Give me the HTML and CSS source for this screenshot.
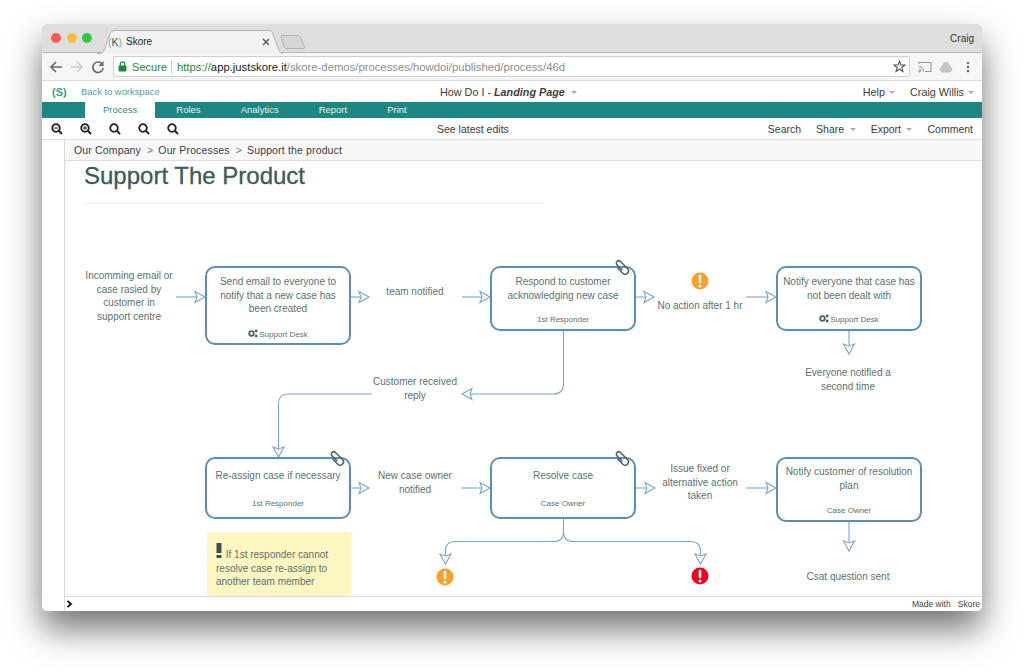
FILE: index.html
```html
<!DOCTYPE html>
<html lang="en">
<head>
    <meta charset="UTF-8">
    <title>Skore</title>
    <link rel="stylesheet" href="styles.css">
</head>
<body>
    <div class="window">
        <!-- browser title bar -->
        <div class="titlebar">
            <div class="lights">
                <span class="light red"></span>
                <span class="light yellow"></span>
                <span class="light green"></span>
            </div>
            <div class="tab">
                <svg class="tab-shape" width="186" height="24" viewBox="0 0 186 24"><path d="M0 23.5H3C6 23.5 7 21 8 18L13 4C14 1.500 15 .5 18 .5H171C174 .5 175 1.500 176 4L181 18C182 21 183 23.500 186 23.500" fill="#f2f2f2" stroke="#b4b4b4"/></svg>
                <span class="favicon"><b class="fav-paren">(</b>K<b class="fav-paren">)</b></span>
                <span class="tab-title">Skore</span>
                <svg class="tab-close" width="8" height="8" viewBox="0 0 8 8"><path d="M1 1L7 7M7 1L1 7" stroke="#555" stroke-width="1.400"/></svg>
            </div>
            <svg class="newtab" width="26" height="14" viewBox="0 0 26 14"><path d="M1 1.500Q.5 .5 2 .5H18Q19.500 .5 20 1.500L24.500 12Q25 13.500 23.500 13.500H6Q5 13.500 4.500 12.500Z" fill="#d6d6d6" stroke="#b2b2b2"/></svg>
            <span class="chrome-user">Craig</span>
        </div>

        <!-- browser toolbar -->
        <div class="urlbar">
            <svg class="nav-icon" width="14" height="14" viewBox="0 0 14 14"><path d="M13 7H2M7 2L2 7L7 12" fill="none" stroke="#666" stroke-width="1.600"/></svg>
            <svg class="nav-icon" width="14" height="14" viewBox="0 0 14 14"><path d="M1 7H12M7 2L12 7L7 12" fill="none" stroke="#ccc" stroke-width="1.600"/></svg>
            <svg class="nav-icon" width="14" height="14" viewBox="0 0 14 14"><path d="M11.500 4.500A5.200 5.200 0 1 0 12.200 8" fill="none" stroke="#666" stroke-width="1.600"/><path d="M12.500 1V6H7.500Z" fill="#666"/></svg>
            <div class="urlbox">
                <svg width="9" height="11" viewBox="0 0 9 11"><rect x="0.500" y="4.500" width="8" height="6" rx="1" fill="#1c8a3e"/><path d="M2.300 5V3A2.200 2.200 0 0 1 6.700 3V5" fill="none" stroke="#1c8a3e" stroke-width="1.200"/></svg>
                <span class="secure">Secure</span>
                <span class="url"><span class="url-scheme">https://</span><span class="url-host">app.justskore.it</span>/skore-demos/processes/howdoi/published/process/46d</span>
                <svg class="star" width="13" height="13" viewBox="0 0 13 13"><path d="M6.500 1.200L8 5H12L8.800 7.500L10 11.500L6.500 9.200L3 11.500L4.200 7.500L1 5H5Z" fill="none" stroke="#555" stroke-width="1.100"/></svg>
            </div>
            <svg class="ext-icon ext-cast" width="14" height="12" viewBox="0 0 14 12"><path d="M1 3V1.500H13V10.500H7M1 5.500A5 5 0 0 1 5.500 10.500M1 8A2.500 2.500 0 0 1 3 10.500" fill="none" stroke="#8a9a9a" stroke-width="1.100"/><circle cx="1.300" cy="10.500" r="1" fill="#8a9a9a"/></svg>
            <svg class="ext-icon ext-drive" width="14" height="12" viewBox="0 0 14 12"><path d="M5 1H9L13.500 8.500L11.500 11.500H2.500L.5 8.500Z" fill="#c4c4c4"/></svg>
            <svg class="ext-icon ext-menu" width="4" height="12" viewBox="0 0 4 12"><circle cx="2" cy="2" r="1.200" fill="#666"/><circle cx="2" cy="6" r="1.200" fill="#666"/><circle cx="2" cy="10" r="1.200" fill="#666"/></svg>
        </div>

        <!-- app header -->
        <div class="app-header">
            <div class="app-left">
                <span class="logo">(S)</span>
                <a class="back-link">Back to workspace</a>
            </div>
            <div class="app-title">How Do I - <b><i>Landing Page</i></b><span class="caret"></span></div>
            <div class="app-right">
                <span>Help<span class="caret"></span></span>
                <span>Craig Willis<span class="caret"></span></span>
            </div>
        </div>

        <!-- tabs -->
        <div class="tabs">
            <span class="tabs-item active">Process</span>
            <span class="tabs-item">Roles</span>
            <span class="tabs-item">Analytics</span>
            <span class="tabs-item">Report</span>
            <span class="tabs-item">Print</span>
        </div>

        <!-- tools -->
        <div class="tools">
            <div class="zooms">
                <svg width="12" height="12" viewBox="0 0 12 12"><circle cx="5" cy="5" r="3.800" fill="none" stroke="#222" stroke-width="1.800"/><path d="M7.800 7.800L11 11" stroke="#222" stroke-width="2"/><path d="M3 5H7" stroke="#222"/></svg>
                <svg width="12" height="12" viewBox="0 0 12 12"><circle cx="5" cy="5" r="3.800" fill="none" stroke="#222" stroke-width="1.800"/><path d="M7.800 7.800L11 11" stroke="#222" stroke-width="2"/><path d="M3 5H7M5 3V7" stroke="#222"/></svg>
                <svg width="12" height="12" viewBox="0 0 12 12"><circle cx="5" cy="5" r="3.800" fill="none" stroke="#222" stroke-width="1.800"/><path d="M7.800 7.800L11 11" stroke="#222" stroke-width="2"/></svg>
                <svg width="12" height="12" viewBox="0 0 12 12"><circle cx="5" cy="5" r="3.800" fill="none" stroke="#222" stroke-width="1.800"/><path d="M7.800 7.800L11 11" stroke="#222" stroke-width="2"/></svg>
                <svg width="12" height="12" viewBox="0 0 12 12"><circle cx="5" cy="5" r="3.800" fill="none" stroke="#222" stroke-width="1.800"/><path d="M7.800 7.800L11 11" stroke="#222" stroke-width="2"/></svg>
            </div>
            <div class="latest">See latest edits</div>
            <div class="tools-right">
                <span>Search</span>
                <span>Share<span class="caret"></span></span>
                <span>Export<span class="caret"></span></span>
                <span>Comment</span>
            </div>
        </div>

        <div class="main">
            <div class="rail"></div>
            <div class="content">
                <div class="crumbs">
                    <span>Our Company</span><span class="crumb-sep">&gt;</span><span>Our Processes</span><span class="crumb-sep">&gt;</span><span>Support the product</span>
                </div>

                <!-- diagram canvas -->
                <div class="canvas">
                    <h1 class="page-title">Support The Product</h1>
                    <div class="title-rule"></div>

                    <svg class="layer" width="916" height="435" viewBox="65 161 916 435">
                        <defs>
                            <path id="head-r" d="M-10 -5.500L0 0L-10 5.500L-8 0Z" fill="#fff" stroke="#7ba5cb" stroke-width="1.100"/>
                            <path id="head-d" d="M-5.500 -10L0 0L5.500 -10L0 -8Z" fill="#fff" stroke="#7ba5cb" stroke-width="1.100"/>
                            <path id="head-l" d="M10 -5.500L0 0L10 5.500L8 0Z" fill="#fff" stroke="#7ba5cb" stroke-width="1.100"/>
                        </defs>
                        <g fill="none" stroke="#7ba5cb" stroke-width="1.100">
                            <path d="M176 297H197"/>
                            <path d="M351 297H361"/>
                            <path d="M462 297H482"/>
                            <path d="M636 297H646"/>
                            <path d="M746 297H768"/>
                            <path d="M849 331V346"/>
                            <path d="M563.500 331V384Q563.500 394 553 394H470"/>
                            <path d="M372 394H288Q278.500 394 278.500 404V449"/>
                            <path d="M351 488H361"/>
                            <path d="M461 488H482"/>
                            <path d="M636 488H647"/>
                            <path d="M746 488H768"/>
                            <path d="M849 522V543"/>
                            <path d="M563.500 519V532Q563.500 541.500 553 541.500H455Q445.500 541.500 445.500 551V556"/>
                            <path d="M563.500 532Q563.500 541.500 574 541.500H690Q700.500 541.500 700.500 551V556"/>
                        </g>
                        <use href="#head-r" x="205" y="297"/>
                        <use href="#head-r" x="369" y="297"/>
                        <use href="#head-r" x="490" y="297"/>
                        <use href="#head-r" x="654" y="297"/>
                        <use href="#head-r" x="776" y="297"/>
                        <use href="#head-d" x="849" y="354"/>
                        <use href="#head-l" x="462" y="394"/>
                        <use href="#head-d" x="278.500" y="457"/>
                        <use href="#head-r" x="369" y="488"/>
                        <use href="#head-r" x="490" y="488"/>
                        <use href="#head-r" x="655" y="488"/>
                        <use href="#head-r" x="776" y="488"/>
                        <use href="#head-d" x="849" y="551"/>
                        <use href="#head-d" x="445.500" y="564"/>
                        <use href="#head-d" x="700.500" y="564"/>
                    </svg>

                    <div class="label lb-incoming">Incomming email or<br>case rasied by<br>customer in<br>support centre</div>
                    <div class="label lb-team">team notified</div>
                    <div class="label lb-noaction">No action after 1 hr</div>
                    <div class="label lb-everyone">Everyone notified a<br>second time</div>
                    <div class="label lb-reply">Customer received<br>reply</div>
                    <div class="label lb-owner">New case owner<br>notified</div>
                    <div class="label lb-issue">Issue fixed or<br>alternative action<br>taken</div>
                    <div class="label lb-csat">Csat question sent</div>

                    <div class="node n-send">
                        <div class="node-text">Send email to everyone to notify that a new case has been created</div>
                        <div class="node-role"><svg width="10" height="9" viewBox="0 0 10 9"><circle cx="3.500" cy="4.500" r="2.300" fill="none" stroke="#4b6262" stroke-width="1.800"/><circle cx="8.200" cy="2" r="1.400" fill="#4b6262"/><circle cx="8.200" cy="7" r="1.400" fill="#4b6262"/></svg>Support Desk</div>
                    </div>
                    <div class="node n-respond">
                        <div class="node-text">Respond to customer acknowledging new case</div>
                        <div class="node-role">1st Responder</div>
                    </div>
                    <div class="node n-notify">
                        <div class="node-text">Notify everyone that case has not been dealt with</div>
                        <div class="node-role"><svg width="10" height="9" viewBox="0 0 10 9"><circle cx="3.500" cy="4.500" r="2.300" fill="none" stroke="#4b6262" stroke-width="1.800"/><circle cx="8.200" cy="2" r="1.400" fill="#4b6262"/><circle cx="8.200" cy="7" r="1.400" fill="#4b6262"/></svg>Support Desk</div>
                    </div>
                    <div class="node node-short n-reassign">
                        <div class="node-text">Re-assign case if necessary</div>
                        <div class="node-role">1st Responder</div>
                    </div>
                    <div class="node node-short n-resolve">
                        <div class="node-text">Resolve case</div>
                        <div class="node-role">Case Owner</div>
                    </div>
                    <div class="node n-plan">
                        <div class="node-text">Notify customer of resolution plan</div>
                        <div class="node-role">Case Owner</div>
                    </div>

                    <div class="note"><svg class="bang" width="6" height="15" viewBox="0 0 6 15"><rect x="0.500" width="5" height="10" fill="#3a5050"/><rect x="0.500" y="12" width="5" height="3" fill="#3a5050"/></svg> If 1st responder cannot resolve case re-assign to another team member</div>

                    <!-- clips and alerts sit over the nodes -->
                    <svg class="layer" width="916" height="435" viewBox="65 161 916 435">
                        <defs>
                            <g id="clip" fill="none" stroke="#4d6062" stroke-width="1.500">
                                <path transform="rotate(-45)" d="M-2 2.500V-5A2.400 2.400 0 0 1 2.800 -5V5A3.300 3.300 0 0 1 -3.800 5V-2.500"/>
                            </g>
                            <g id="alert">
                                <path d="M0 -5V1" stroke="#fff" stroke-width="2.600" stroke-linecap="round"/>
                                <circle cy="5" r="1.500" fill="#fff"/>
                            </g>
                        </defs>
                        <use href="#clip" x="622" y="267"/>
                        <use href="#clip" x="337" y="458"/>
                        <use href="#clip" x="622" y="458"/>
                        <circle cx="700" cy="281" r="8.500" fill="#f9a02c"/>
                        <use href="#alert" x="700" y="281"/>
                        <circle cx="445" cy="577" r="8.500" fill="#f9a02c"/>
                        <use href="#alert" x="445" y="577"/>
                        <circle cx="700" cy="576" r="8.500" fill="#f5001e"/>
                        <use href="#alert" x="700" y="576"/>
                    </svg>
                </div>

                <div class="footer">
                    <svg width="7" height="8" viewBox="0 0 7 8"><path d="M1.500 1L5 4L1.500 7" fill="none" stroke="#222" stroke-width="2"/></svg>
                    <span class="made">Made with &nbsp; Skore</span>
                </div>
            </div>
        </div>
    </div>
</body>
</html>
```

FILE: styles.css
```css
/* page */
html, body {
    height: 100%;
}
body {
    margin: 0;
    background-color: #fff;
    font-family: "Liberation Sans", Arial, sans-serif;
    overflow: hidden;
}
.window {
    width: 940px;
    height: 587px;
    margin: 24px 0 0 42px;
    display: flex;
    flex-direction: column;
    background-color: #fff;
    border-radius: 5px;
    box-shadow: 0 18px 34px rgba(0, 0, 0, 0.55);
    overflow: hidden;
}

/* browser chrome */
.titlebar {
    height: 28px;
    flex: none;
    display: flex;
    align-items: flex-end;
    background-color: #dedede;
    border-bottom: 1px solid #b8b8b8;
}
.lights {
    width: 55px;
    flex: none;
    align-self: center;
    display: flex;
    gap: 5.500px;
    padding-left: 9px;
    box-sizing: border-box;
}
.light {
    width: 10px;
    height: 10px;
    flex: none;
    border-radius: 50%;
}
.light.red { background-color: #fc5753; }
.light.yellow { background-color: #fdbc40; }
.light.green { background-color: #33c748; }
.tab {
    position: relative;
    width: 186px;
    height: 23px;
    margin-bottom: -1px;
    flex: none;
    display: flex;
    align-items: center;
    padding: 0 13px 0 11px;
    box-sizing: border-box;
    font-size: 10px;
    color: #222;
}
.tab-shape {
    position: absolute;
    left: 0;
    top: 0;
}
.favicon {
    position: relative;
    width: 14px;
    margin-right: 4px;
    font-size: 10.500px;
    text-align: center;
    color: #2b5f5c;
    white-space: nowrap;
}
.fav-paren {
    color: #59c48c;
    font-weight: normal;
}
.tab-title {
    position: relative;
    flex: 1;
}
.tab-close {
    position: relative;
}
.newtab {
    flex: none;
    margin: 0 0 3px -3px;
}
.chrome-user {
    margin-left: auto;
    align-self: center;
    padding-right: 8px;
    font-size: 10px;
    color: #333;
}
.urlbar {
    height: 28px;
    flex: none;
    display: flex;
    align-items: center;
    padding-left: 7px;
    box-sizing: border-box;
    background-color: #f6f6f6;
    border-bottom: 1px solid #dcdcdc;
}
.nav-icon {
    margin-right: 7.200px;
    flex: none;
}
.urlbox {
    width: 797px;
    height: 21px;
    flex: none;
    display: flex;
    align-items: center;
    gap: 5px;
    padding: 0 3px 0 4.500px;
    box-sizing: border-box;
    background-color: #fff;
    border: 1px solid #cfcfcf;
    border-radius: 2px;
    font-size: 11.300px;
    white-space: nowrap;
}
.secure {
    padding-right: 4px;
    border-right: 1px solid #ccc;
    font-size: 11px;
    line-height: 14px;
    color: #1c8a3e;
}
.url { color: #8d8d8d; }
.url-scheme { color: #1c8a3e; }
.url-host { color: #222; }
.star { margin-left: auto; }
.ext-icon { flex: none; }
.ext-cast { margin-left: 8px; }
.ext-drive { margin-left: 7px; }
.ext-menu { margin-left: 13px; }

/* app header */
.app-header {
    position: relative;
    height: 21px;
    flex: none;
    display: flex;
    align-items: center;
    justify-content: space-between;
    padding: 0 8px 0 10px;
    font-size: 10.800px;
    color: #3c3c3c;
}
.app-left {
    display: flex;
    align-items: center;
}
.logo {
    width: 29px;
    font-size: 11px;
    font-weight: bold;
    color: #3f9a95;
}
.back-link {
    font-size: 9.400px;
    color: #4fa39e;
}
.app-title {
    position: absolute;
    left: 398px;
    white-space: nowrap;
}
.app-right {
    display: flex;
    gap: 15px;
}
.caret {
    display: inline-block;
    width: 0;
    height: 0;
    margin-left: 6px;
    vertical-align: 2px;
    border-left: 3px solid transparent;
    border-right: 3px solid transparent;
    border-top: 3px solid #aaa;
}
.app-right .caret {
    margin-left: 4px;
}

/* teal tabs */
.tabs {
    height: 16px;
    flex: none;
    display: flex;
    padding-left: 43px;
    background-color: #1f8783;
    font-size: 9.500px;
    line-height: 16px;
    color: #e4f2f1;
}
.tabs-item {
    padding: 0 20px;
}
.tabs-item.active {
    padding: 0 18px;
    margin-right: 1px;
    background-color: #fff;
    color: #2f8f8a;
}

/* tool row */
.tools {
    position: relative;
    height: 22px;
    flex: none;
    display: flex;
    align-items: center;
    justify-content: space-between;
    padding: 0 9px 0 9px;
    box-sizing: border-box;
    border-bottom: 1px solid #ddd;
    font-size: 10.500px;
    color: #3c3c3c;
}
.tools .caret {
    margin-left: 5.500px;
}
.zooms {
    display: flex;
    gap: 17px;
}
.latest {
    position: absolute;
    left: 395px;
}
.tools-right {
    display: flex;
    gap: 15px;
}

/* main area */
.main {
    flex: 1;
    display: flex;
    min-height: 0;
}
.rail {
    width: 22px;
    flex: none;
    border-right: 1px solid #d8d8d8;
}
.content {
    flex: 1;
    display: flex;
    flex-direction: column;
    min-width: 0;
}
.crumbs {
    height: 21px;
    flex: none;
    display: flex;
    align-items: center;
    padding-left: 9px;
    box-sizing: border-box;
    background-color: #f8f8f8;
    border-bottom: 1px solid #ddd;
    font-size: 10.500px;
    letter-spacing: 0.150px;
    color: #3c3c3c;
}
.crumb-sep {
    margin: 0 5px 0 6px;
    color: #777;
}
.canvas {
    position: relative;
    height: 435px;
    flex: none;
    overflow: hidden;
    background: linear-gradient(90deg, #f8f8f8 4px, #fff 4px);
}
.page-title {
    margin: 0;
    padding: 1px 0 0 19px;
    font-size: 24px;
    line-height: 28px;
    font-weight: normal;
    -webkit-text-stroke: 0.300px #3d5a5a;
    color: #3d5a5a;
}
.title-rule {
    width: 460px;
    height: 1px;
    margin: 13px 0 0 19px;
    background-color: #eeeeee;
}
.footer {
    height: 15px;
    flex: none;
    display: flex;
    align-items: center;
    justify-content: space-between;
    padding: 0 2px 0 1px;
    box-sizing: border-box;
    border-top: 1px solid #ddd;
}
.made {
    font-size: 8.500px;
    color: #444;
}

/* diagram */
.layer {
    position: absolute;
    left: 0;
    top: 0;
}
.label {
    position: absolute;
    width: 130px;
    font-size: 10px;
    line-height: 13.500px;
    text-align: center;
    color: #5a7271;
}
.lb-incoming { left: -1px; top: 108px; }
.lb-team { left: 285px; top: 124px; }
.lb-noaction { left: 570px; top: 138px; }
.lb-everyone { left: 718px; top: 205px; }
.lb-reply { left: 285px; top: 214px; }
.lb-owner { left: 285px; top: 308px; }
.lb-issue { left: 570px; top: 301px; }
.lb-csat { left: 718px; top: 409px; }
.node {
    position: absolute;
    width: 146px;
    display: flex;
    flex-direction: column;
    justify-content: space-between;
    padding: 7px 4px 4px;
    box-sizing: border-box;
    background-color: #fff;
    border: 2px solid #5b8fb9;
    border-radius: 10px;
    text-align: center;
    color: #5a7271;
}
.node-short {
    padding-top: 10px;
    padding-bottom: 8px;
}
.node-text {
    font-size: 10px;
    line-height: 13.700px;
}
.node-role {
    font-size: 8px;
    line-height: 11px;
}
.node-role svg {
    margin-right: 1px;
    vertical-align: -1px;
}
.n-send { left: 140px; top: 105px; height: 79px; padding-bottom: 3px; }
.n-respond { left: 425px; top: 105px; height: 65px; }
.n-notify { left: 711px; top: 105px; height: 65px; }
.n-reassign { left: 140px; top: 296px; height: 62px; }
.n-resolve { left: 425px; top: 296px; height: 62px; }
.n-plan { left: 711px; top: 296px; height: 65px; padding-top: 6px; }
.note {
    position: absolute;
    left: 142px;
    top: 371px;
    width: 144px;
    height: 70px;
    padding: 11px 8px 0 9px;
    box-sizing: border-box;
    background-color: #fdf6c0;
    font-size: 10px;
    line-height: 13.500px;
    color: #5a7271;
}
.bang {
    margin-right: 1px;
}
```
